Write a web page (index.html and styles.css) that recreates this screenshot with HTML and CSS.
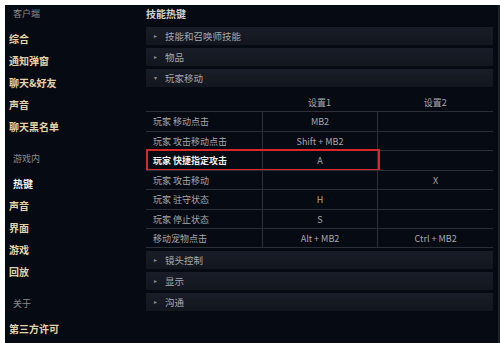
FILE: index.html
```html
<!DOCTYPE html>
<html lang="zh-CN">
<head>
  <meta charset="UTF-8">
  <meta name="viewport" content="width=device-width, initial-scale=1.0">
  <title>技能热键</title>
  <link rel="stylesheet" href="styles.css">
</head>
<body>
  <div class="app">
    <!-- Sidebar -->
    <div class="sidebar">
      <div class="group-title">客户端</div>
      <div class="nav-item">综合</div>
      <div class="nav-item">通知弹窗</div>
      <div class="nav-item">聊天&amp;好友</div>
      <div class="nav-item">声音</div>
      <div class="nav-item">聊天黑名单</div>

      <div class="group-title spaced">游戏内</div>
      <div class="nav-item active">热键</div>
      <div class="nav-item">声音</div>
      <div class="nav-item">界面</div>
      <div class="nav-item">游戏</div>
      <div class="nav-item">回放</div>

      <div class="group-title spaced">关于</div>
      <div class="nav-item">第三方许可</div>
    </div>

    <!-- Main -->
    <div class="main">
      <h2 class="page-title">技能热键</h2>

      <div class="section"><span class="arrow">&#9656;</span>技能和召唤师技能</div>
      <div class="section"><span class="arrow">&#9656;</span>物品</div>
      <div class="section"><span class="arrow">&#9662;</span>玩家移动</div>

      <div class="keys">
        <div class="keys-head">
          <div></div>
          <div>设置1</div>
          <div>设置2</div>
        </div>
        <div class="key-row">
          <div class="key-name">玩家 移动点击</div>
          <div>MB2</div>
          <div></div>
        </div>
        <div class="key-row">
          <div class="key-name">玩家 攻击移动点击</div>
          <div>Shift + MB2</div>
          <div></div>
        </div>
        <div class="key-row marked">
          <div class="key-name">玩家 快捷指定攻击</div>
          <div>A</div>
          <div></div>
        </div>
        <div class="key-row">
          <div class="key-name">玩家 攻击移动</div>
          <div></div>
          <div>X</div>
        </div>
        <div class="key-row">
          <div class="key-name">玩家 驻守状态</div>
          <div>H</div>
          <div></div>
        </div>
        <div class="key-row">
          <div class="key-name">玩家 停止状态</div>
          <div>S</div>
          <div></div>
        </div>
        <div class="key-row last">
          <div class="key-name">移动宠物点击</div>
          <div>Alt + MB2</div>
          <div>Ctrl + MB2</div>
        </div>
      </div>

      <div class="section"><span class="arrow">&#9656;</span>镜头控制</div>
      <div class="section"><span class="arrow">&#9656;</span>显示</div>
      <div class="section"><span class="arrow">&#9656;</span>沟通</div>
    </div>
  </div>
</body>
</html>
```

FILE: styles.css
```css
body {
  margin: 0;
  padding: 0;
  background: #ffffff;
  font-family: "Noto Sans CJK SC", "Noto Sans", sans-serif;
}

.app {
  display: flex;
  margin: 5px 0 0 5px;
  height: 338px;
  background: #060a12;
  border-right: 2px solid #1c2029;
}

/* Sidebar */
.sidebar {
  width: 130px;
  flex-shrink: 0;
}

.group-title {
  height: 18px;
  line-height: 18px;
  padding-left: 8px;
  margin-bottom: 4px;
  font-size: 9px;
  color: #8a8c90;
}

.group-title.spaced {
  margin-top: 13px;
}

.nav-item {
  height: 22px;
  line-height: 23px;
  padding-left: 4px;
  font-size: 10px;
  font-weight: bold;
  color: #e2d4a8;
}

.nav-item.active {
  padding-left: 8px;
  color: #f4f4f4;
}

/* Main */
.main {
  flex: 1;
  padding: 0 5px 0 11px;
}

.page-title {
  margin: 0;
  height: 22px;
  line-height: 18px;
  font-size: 10px;
  font-weight: bold;
  color: #cfd0d2;
}

.section {
  height: 18px;
  line-height: 18px;
  margin-bottom: 3px;
  background: linear-gradient(#181d27, #12161f);
  font-size: 9.5px;
  color: #a6a8ac;
}

.arrow {
  display: inline-block;
  width: 19px;
  text-align: center;
  font-size: 6px;
  color: #8c8f94;
  vertical-align: top;
}

/* Hotkey table */
.keys {
  margin-bottom: 3px;
}

.keys-head,
.key-row {
  display: grid;
  grid-template-columns: 1fr 1fr 1fr;
}

.keys-head {
  height: 21px;
  line-height: 25px;
  font-size: 9px;
  color: #a6a8ac;
  text-align: center;
}

.key-row {
  position: relative;
  height: 19.5px;
  line-height: 19px;
  box-sizing: border-box;
  border-top: 1px solid #2a2f38;
  font-size: 9px;
  color: #a6a8ac;
  text-align: center;
}

.key-row.last {
  border-bottom: 1px solid #2a2f38;
}

.key-row > div + div {
  border-left: 1px solid #2a2f38;
}

.key-row .key-name {
  text-align: left;
  padding-left: 7px;
}

.key-row.marked .key-name {
  font-weight: bold;
  color: #f0f0f0;
}

/* red highlight box over the row */
.key-row.marked::after {
  content: "";
  position: absolute;
  left: 0;
  top: -2px;
  bottom: -1px;
  width: calc(66.67% + 3px);
  border: 2px solid #d8262b;
  box-sizing: border-box;
}
```
